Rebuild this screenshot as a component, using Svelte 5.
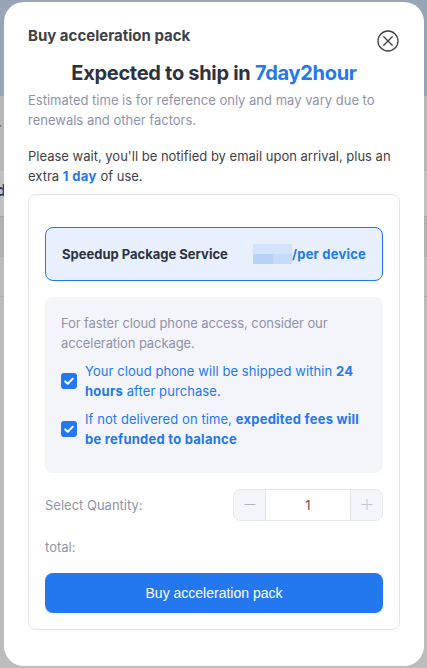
<script lang="ts">
  let quantity = $state(1);
</script>

<div class="backdrop">
  <div class="page-behind">
    <div class="band top"></div>
    <div class="band mid"></div>
    <div class="band light"></div>
    <div class="band dark"></div>
    <div class="band plain"></div>
    <div class="band plain last"></div>
    <span class="peek small">r</span>
    <span class="peek big">d</span>
  </div>

  <div class="dialog">
    <div class="dialog-head">
      <h2>Buy acceleration pack</h2>
      <button class="close" aria-label="Close">
        <svg viewBox="0 0 22 22" width="22" height="22" fill="none" stroke="#3f3f46" stroke-width="1.3">
          <circle cx="11" cy="11" r="10"/>
          <path d="M6.8 6.8l8.4 8.4M15.2 6.8l-8.4 8.4" stroke-linecap="round"/>
        </svg>
      </button>
    </div>

    <h1>Expected to ship in <span class="blue">7day2hour</span></h1>
    <p class="hint">Estimated time is for reference only and may vary due to renewals and other factors.</p>
    <p class="notice">Please wait, you'll be notified by email upon arrival, plus an extra <b class="blue">1 day</b> of use.</p>

    <div class="card">
      <div class="service">
        <span class="service-name">Speedup Package Service</span>
        <span class="service-price">
          <span class="blur-price" aria-hidden="true">
            <i></i><i></i><i></i><i></i>
          </span>/per device
        </span>
      </div>

      <div class="benefits">
        <p class="intro">For faster cloud phone access, consider our acceleration package.</p>
        <div class="benefit">
          <span class="check">
            <svg viewBox="0 0 16 16" width="16" height="16" fill="none" stroke="#fff" stroke-width="2" stroke-linecap="round" stroke-linejoin="round">
              <path d="M4.2 8.4l2.6 2.4 5-5.2"/>
            </svg>
          </span>
          <span>Your cloud phone will be shipped within <b>24 hours</b> after purchase.</span>
        </div>
        <div class="benefit">
          <span class="check">
            <svg viewBox="0 0 16 16" width="16" height="16" fill="none" stroke="#fff" stroke-width="2" stroke-linecap="round" stroke-linejoin="round">
              <path d="M4.2 8.4l2.6 2.4 5-5.2"/>
            </svg>
          </span>
          <span>If not delivered on time, <b>expedited fees will be refunded to balance</b></span>
        </div>
      </div>

      <div class="qty-row">
        <span class="label">Select Quantity:</span>
        <div class="stepper">
          <button class="step" aria-label="Decrease">
            <svg viewBox="0 0 12 12" width="12" height="12" stroke="#b4b7c2" stroke-width="1"><path d="M0.5 5.5h11"/></svg>
          </button>
          <span class="qty">{quantity}</span>
          <button class="step" aria-label="Increase">
            <svg viewBox="0 0 12 12" width="12" height="12" stroke="#c4c6d0" stroke-width="1"><path d="M0.5 5.5h11M6 0v11"/></svg>
          </button>
        </div>
      </div>

      <div class="total label">total:</div>

      <button class="buy">Buy acceleration pack</button>
    </div>
  </div>
</div>

<style>
  :global(body) {
    margin: 0;
    font-family: Inter, "Liberation Sans", sans-serif;
  }

  .backdrop {
    position: relative;
    width: 427px;
    height: 668px;
    overflow: hidden;
    background: #bcbcbc;
    box-sizing: border-box;
    padding: 2px 3px 0 4px;
  }

  .page-behind {
    position: absolute;
    inset: 0;
  }

  .band.top {
    height: 96px;
    background: #98a5b6;
  }

  .band.mid {
    height: 75px;
    background: #b7b7b7;
  }

  .band.light {
    height: 46px;
    background: #c0c0c0;
    border-bottom: 1px solid #a9a9a9;
    box-sizing: border-box;
  }

  .band.dark {
    height: 40px;
    background: #b1b1b1;
  }

  .band.plain {
    height: 40px;
    background: #bcbcbc;
    border-bottom: 1px solid #adadad;
    box-sizing: border-box;
  }

  .band.last {
    height: 371px;
    border-bottom: 0;
  }

  .peek {
    position: absolute;
    left: -4px;
    font-weight: 700;
  }

  .peek.small {
    top: 120px;
    font-size: 13px;
    color: #7a6a55;
  }

  .peek.big {
    top: 180px;
    font-size: 16px;
    color: #1f3f7a;
  }

  .dialog {
    position: relative;
    height: 664px;
    box-sizing: border-box;
    background: #fff;
    border-radius: 20px;
    padding: 24px 24px 0;
  }

  .dialog-head {
    display: flex;
    justify-content: space-between;
    align-items: flex-start;
  }

  h2 {
    margin: 0;
    font-size: 15px;
    line-height: 20px;
    font-weight: 700;
    color: #3f3f46;
  }

  .close {
    padding: 0;
    border: 0;
    background: none;
    margin: 4px 1px 0 0;
    height: 22px;
  }

  h1 {
    margin: 7px 0 0;
    text-align: center;
    font-size: 20px;
    line-height: 28px;
    font-weight: 700;
    letter-spacing: -0.3px;
    color: #2e3140;
  }

  .blue {
    color: #2378f0;
  }

  .hint {
    margin: 3px 0 0;
    font-size: 13px;
    line-height: 20px;
    color: #8f93ab;
  }

  .notice {
    margin: 16px 0 0;
    font-size: 13px;
    line-height: 20px;
    color: #3f3f46;
  }

  .notice b {
    font-weight: 700;
    letter-spacing: 0.4px;
  }

  .card {
    margin-top: 8px;
    border: 1px solid #e5e5e8;
    border-radius: 8px;
    padding: 32px 16px 16px;
  }

  .service {
    display: flex;
    justify-content: space-between;
    align-items: center;
    height: 54px;
    box-sizing: border-box;
    padding: 0 16px;
    background: #e8f0fd;
    border: 1px solid #2378f0;
    border-radius: 8px;
    font-size: 13px;
    font-weight: 700;
  }

  .service-name {
    color: #2e3140;
  }

  .service-price {
    display: flex;
    align-items: center;
    color: #2378f0;
    letter-spacing: 0.2px;
  }

  .blur-price {
    display: grid;
    grid-template-columns: 20px 19px;
    grid-template-rows: 10px 10px;
  }

  .blur-price i:nth-child(1),
  .blur-price i:nth-child(2) {
    background: #d3e3fb;
  }

  .blur-price i:nth-child(3) {
    background: #b8d2f9;
  }

  .blur-price i:nth-child(4) {
    background: #c6dafa;
  }

  .benefits {
    margin-top: 16px;
    background: #f4f5fa;
    border-radius: 8px;
    padding: 16px;
    height: 176px;
    box-sizing: border-box;
    font-size: 13px;
    line-height: 20px;
  }

  .intro {
    margin: 0 0 8px;
    color: #8f93ab;
    letter-spacing: -0.1px;
  }

  .benefit {
    display: flex;
    align-items: center;
    gap: 8px;
    margin-bottom: 8px;
    color: #2378f0;
    letter-spacing: 0.08px;
  }

  .benefit b {
    font-weight: 700;
    letter-spacing: 0.25px;
  }

  .check {
    flex: none;
    width: 16px;
    height: 16px;
    background: #2378f0;
    border-radius: 3px;
  }

  .check svg {
    display: block;
  }

  .qty-row {
    display: flex;
    justify-content: space-between;
    align-items: center;
    margin-top: 16px;
  }

  .label {
    font-size: 13px;
    line-height: 20px;
    color: #8f93ab;
  }

  .stepper {
    display: flex;
    align-items: stretch;
    width: 150px;
    height: 32px;
    box-sizing: border-box;
    border: 1px solid #e3e4ec;
    border-radius: 8px;
    overflow: hidden;
  }

  .step {
    width: 31px;
    padding: 0;
    border: 0;
    background: #f4f5fa;
    display: flex;
    align-items: center;
    justify-content: center;
  }

  .qty {
    flex: 1;
    text-align: center;
    line-height: 30px;
    font-size: 13px;
    color: #7a4a44;
    border-left: 1px solid #e3e4ec;
    border-right: 1px solid #e3e4ec;
  }

  .total {
    margin-top: 16px;
  }

  .buy {
    display: block;
    width: 100%;
    height: 40px;
    margin-top: 16px;
    border: 0;
    border-radius: 8px;
    background: #2378f0;
    color: #fff;
    font-family: "Liberation Sans", Arial, sans-serif;
    font-size: 14px;
  }
</style>
